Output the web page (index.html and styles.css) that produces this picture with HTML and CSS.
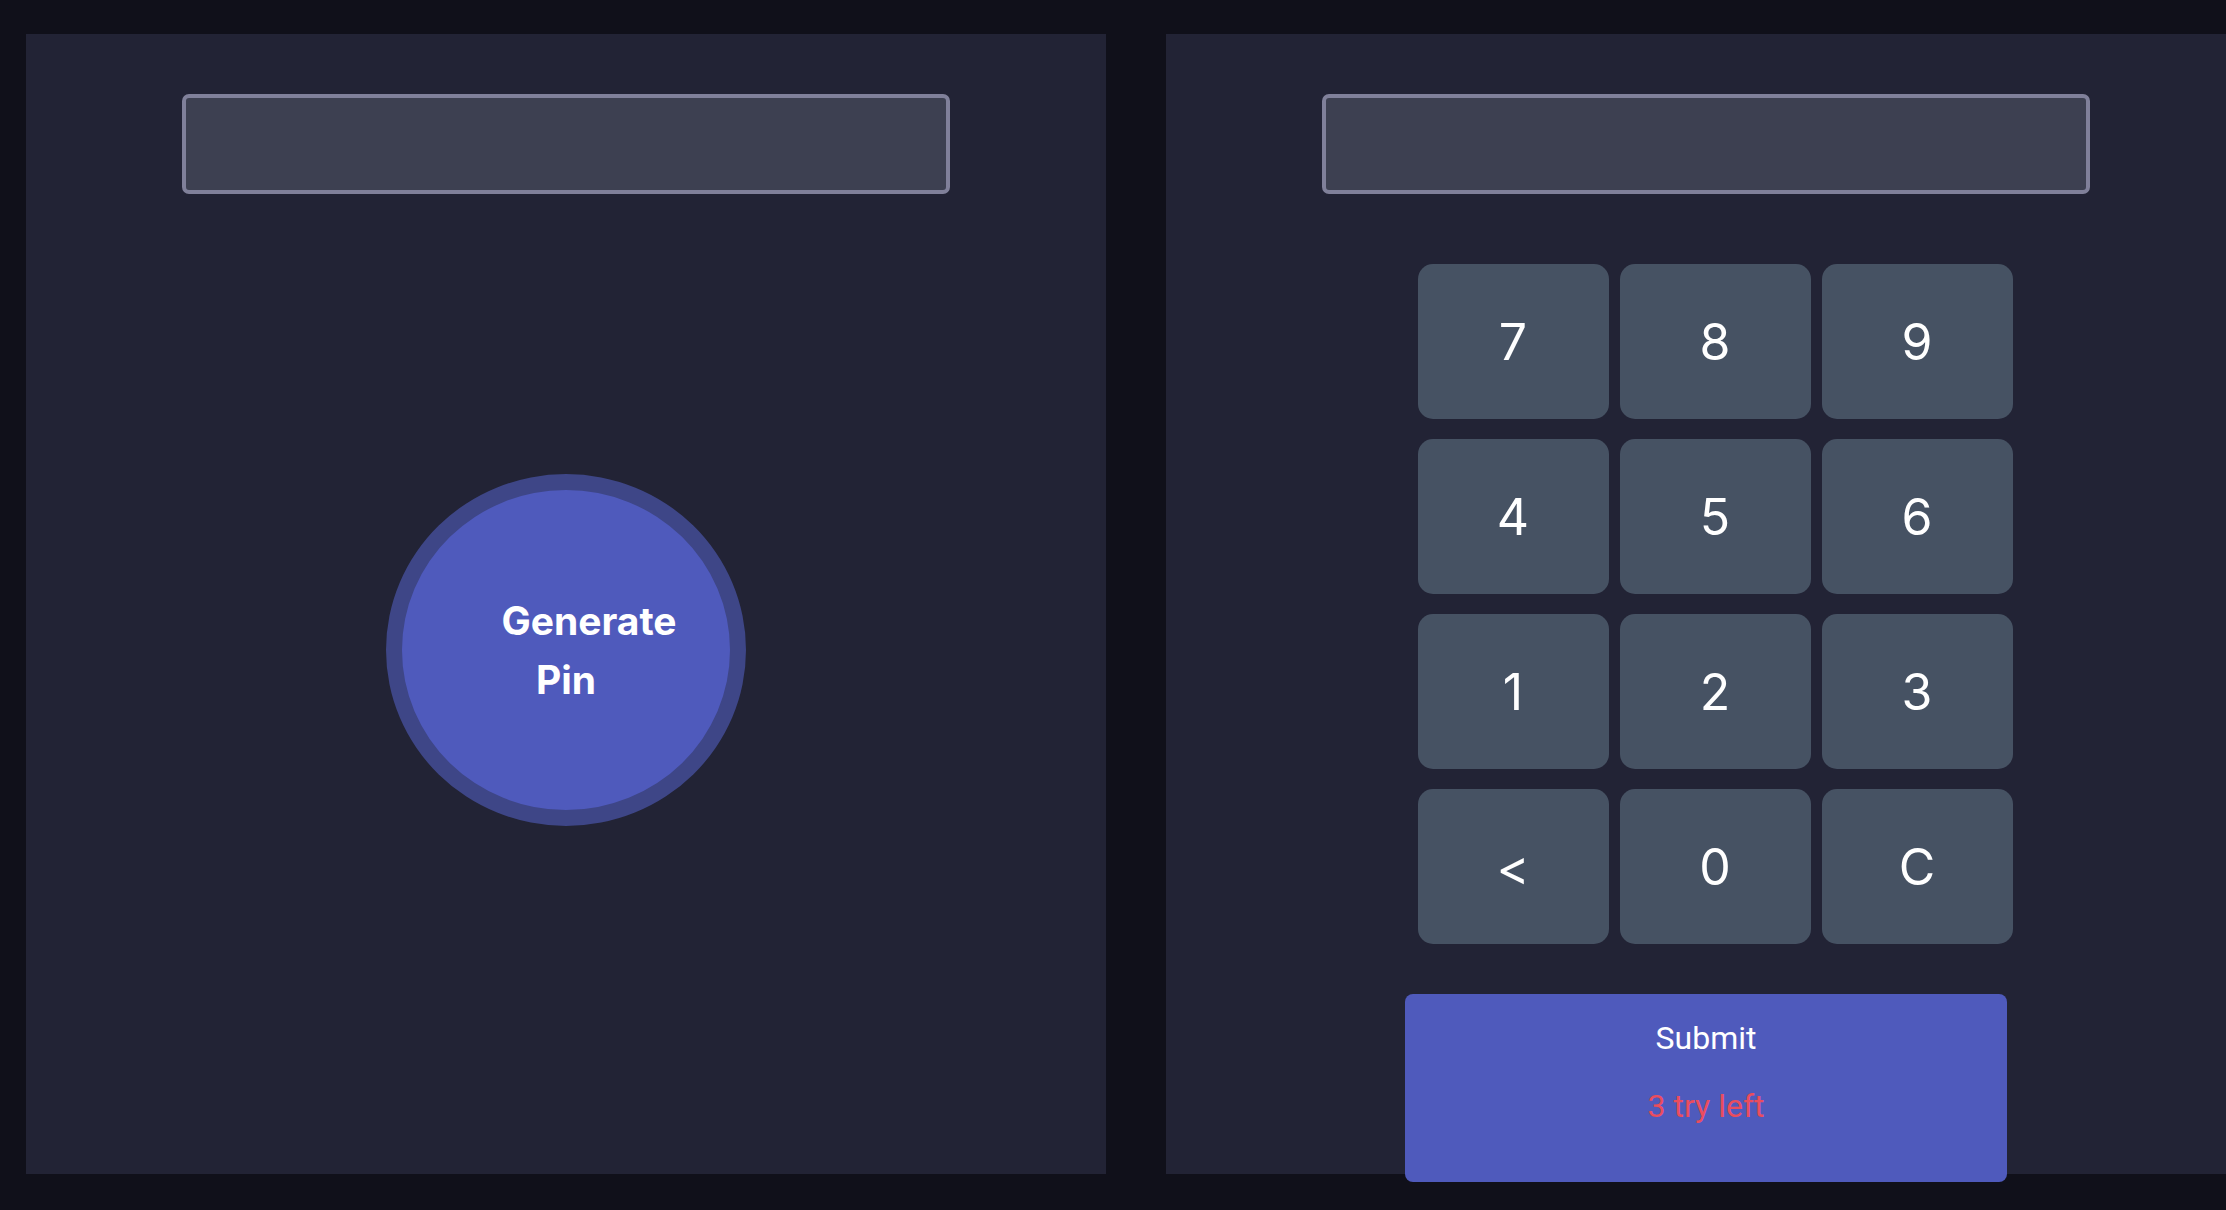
FILE: index.html
```html
<!DOCTYPE html>
<html lang="en">
<head>
<meta charset="utf-8">
<title>Pin Matcher</title>
<link rel="stylesheet" href="styles.css">
</head>
<body>
  <main class="page">
    <section class="panel panel-generate">
      <div class="display"></div>
      <button class="generate-btn">
        <span class="gen-line gen-line-first">Generate</span>
        <span class="gen-line">Pin</span>
      </button>
    </section>
    <section class="panel panel-pad">
      <div class="display"></div>
      <div class="keypad-wrap">
        <div class="keypad">
          <button class="key">7</button>
          <button class="key">8</button>
          <button class="key">9</button>
          <button class="key">4</button>
          <button class="key">5</button>
          <button class="key">6</button>
          <button class="key">1</button>
          <button class="key">2</button>
          <button class="key">3</button>
          <button class="key">&lt;</button>
          <button class="key">0</button>
          <button class="key">C</button>
        </div>
      </div>
      <div class="submit-box">
        <div class="submit-label">Submit</div>
        <div class="tries">3 try left</div>
      </div>
    </section>
  </main>
</body>
</html>
```

FILE: styles.css
```css
html, body {
  margin: 0;
  padding: 0;
  background: #10101a;
}

body {
  width: 2226px;
  height: 1210px;
  overflow: hidden;
}

.page {
  display: flex;
  align-items: flex-start;
  gap: 60px;
  padding: 34px 0 0 26px;
  width: max-content;
}

.panel {
  flex-shrink: 0;
  width: 1080px;
  height: 1140px;
  background: #222335;
  display: flex;
  flex-direction: column;
  align-items: center;
  padding-top: 60px;
  box-sizing: border-box;
}

.panel > * {
  flex-shrink: 0;
}

.display {
  width: 768px;
  height: 100px;
  box-sizing: border-box;
  background: #3d4051;
  border: 4px solid #80809a;
  border-radius: 7px;
}

.generate-btn {
  margin-top: 280px;
  width: 360px;
  height: 352px;
  box-sizing: border-box;
  border: 16px solid #3e4687;
  border-radius: 50%;
  background: #4f5abc;
  color: #ffffff;
  font-family: "Inter", "Liberation Sans", sans-serif;
  font-weight: 700;
  font-size: 39px;
  line-height: 59px;
  display: flex;
  flex-direction: column;
  align-items: center;
  justify-content: center;
  padding: 0;
}

.gen-line {
  display: block;
}

.gen-line-first {
  padding-left: 46px;
}

.keypad-wrap {
  margin-top: 70px;
  padding-left: 18px;
}

.keypad {
  display: grid;
  grid-template-columns: repeat(3, 191px);
  grid-auto-rows: 155px;
  column-gap: 11px;
  row-gap: 20px;
}

.key {
  background: #465263;
  border: none;
  border-radius: 15px;
  color: #ffffff;
  font-family: "Inter", "Liberation Sans", sans-serif;
  font-size: 50px;
  font-weight: 400;
  display: flex;
  align-items: center;
  justify-content: center;
  padding: 0;
}

.submit-box {
  margin-top: 50px;
  width: 602px;
  height: 188px;
  box-sizing: border-box;
  background: #4f5abc;
  border-radius: 8px;
  padding-top: 20px;
  text-align: center;
  font-family: "Roboto", "Liberation Sans", sans-serif;
  font-size: 32px;
  line-height: 48px;
}

.submit-label {
  color: #ffffff;
}

.tries {
  margin-top: 20px;
  color: #ea4d5e;
}
```
